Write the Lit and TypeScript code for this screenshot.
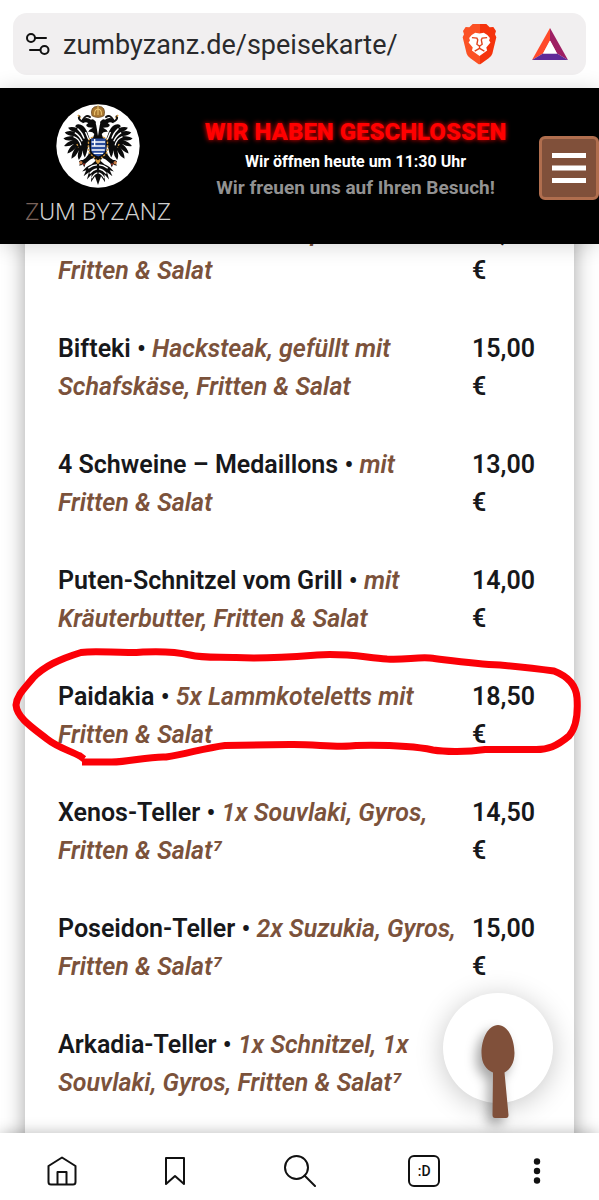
import { LitElement, html, css, svg, nothing } from "lit";
import { customElement, property } from "lit/decorators.js";

interface Dish {
  name: string;
  detail: string;
  price: string;
  marked?: boolean;
}

const DISHES: Dish[] = [
  { name: "Souvlakia", detail: "2x Fleischspieße mit Fritten & Salat", price: "12,50" },
  { name: "Bifteki", detail: "Hacksteak, gefüllt mit Schafskäse, Fritten & Salat", price: "15,00" },
  { name: "4 Schweine – Medaillons", detail: "mit Fritten & Salat", price: "13,00" },
  { name: "Puten-Schnitzel vom Grill", detail: "mit Kräuterbutter, Fritten & Salat", price: "14,00" },
  { name: "Paidakia", detail: "5x Lammkoteletts mit Fritten & Salat", price: "18,50", marked: true },
  { name: "Xenos-Teller", detail: "1x Souvlaki, Gyros, Fritten & Salat⁷", price: "14,50" },
  { name: "Poseidon-Teller", detail: "2x Suzukia, Gyros, Fritten & Salat⁷", price: "15,00" },
  { name: "Arkadia-Teller", detail: "1x Schnitzel, 1x Souvlaki, Gyros, Fritten & Salat⁷", price: "" },
];

// One half of the heraldic eagle; the other half is its mirror image.
const eagleHalf = svg`
  <path fill="#0b0b0b" d="M291 120 L283 112 Q276 104 270 108 Q258 98 246 106 Q238 112 246 118 Q256 112 262 118 Q250 124 262 130
    L276 132 Q264 138 262 144 Q274 142 280 150 L276 162 L266 166 Q262 180 266 200 L262 212
    Q256 222 246 228 Q238 226 234 232 Q242 236 234 244 Q242 244 246 240 L250 250 L254 238 L268 226 L278 222
    L284 230 L272 240 Q256 246 244 262 L256 258 L248 276 L264 264 L258 286 L272 270 L270 294 L282 276 L291 302 Z"/>
  <path fill="#0b0b0b" d="M268 170 L258 142 Q246 118 228 122 Q218 128 230 133 Q212 126 202 132 Q208 142 222 144 Q202 138 192 146 Q200 156 218 156
    Q196 156 188 164 Q196 173 216 168 Q198 174 190 186 Q204 189 220 179 Q202 192 200 208 Q216 204 226 189
    Q212 206 212 224 Q226 218 234 199 Q228 216 234 228 Q244 216 246 199 Q246 214 252 220 Q258 206 260 194 Z"/>
  <path fill="none" stroke="#fff" stroke-width="4" d="M230 134 Q244 146 250 164 M222 146 Q238 156 244 172 M218 158 Q236 164 240 184 M254 144 L264 168
    M262 252 Q276 242 288 242 M266 268 Q276 256 288 254 M272 282 Q280 268 289 266"/>
  <path fill="none" stroke="#111" stroke-width="6" stroke-linecap="round" d="M242 112 Q230 104 236 98 M246 108 Q256 90 267 100"/>
  <path fill="none" stroke="#d79a3c" stroke-width="4" stroke-dasharray="6 4" d="M231 94 L240 103 M276 160 Q260 164 263 180 Q258 206 276 216 Q284 224 291 236 M228 180 L233 190"/>
  <circle cx="240" cy="236" r="5" fill="#c67a45"/>
  <circle cx="249" cy="240" r="3" fill="#a33324"/>
`;

@customElement("restaurant-header")
export class RestaurantHeader extends LitElement {
  static styles = css`
    :host {
      display: flex;
      align-items: center;
      height: 156px;
      padding-left: 26px;
      background: #000;
      color: #fff;
      position: relative;
      z-index: 2;
      box-shadow: 0 2px 20px rgba(0, 0, 0, 0.16);
      box-sizing: border-box;
    }
    .brand {
      display: flex;
      flex-direction: column;
      align-items: center;
      gap: 8px;
      width: 144px;
      color: #cfcfcf;
      text-decoration: none;
      font-size: 24px;
      font-weight: 300;
      line-height: 32px;
      white-space: nowrap;
    }
    .brand svg {
      width: 84px;
      height: 84px;
    }
    .initial {
      color: #7a625a;
    }
    .hours {
      flex: 1;
      text-align: center;
      padding: 0 0 16px 2px;
    }
    .hours p {
      margin: 0;
    }
    .closed {
      font-size: 24px;
      line-height: 32px;
      font-weight: 900;
      color: #f00;
      text-shadow: 0 0 5px #f00;
    }
    .opening {
      font-size: 16px;
      line-height: 28px;
      font-weight: 700;
    }
    .welcome {
      font-size: 19px;
      line-height: 24px;
      font-weight: 700;
      color: #929292;
    }
    .menu {
      width: 60px;
      height: 64px;
      padding: 0;
      border: 3px solid #b06e4e;
      border-radius: 6px;
      background: #80503a;
      display: grid;
      place-items: center;
      margin-top: 4px;
    }
  `;

  render() {
    return html`
      <a class="brand" href="#">
        <svg viewBox="166 61 250 250" aria-hidden="true">
          <circle cx="291" cy="186" r="124" fill="#fff" />
          <g>${eagleHalf}</g>
          <g transform="translate(582 0) scale(-1 1)">${eagleHalf}</g>
          <path d="M273 96 Q266 68 291 68 Q316 68 309 96 Q291 106 273 96Z" fill="#a97832" stroke="#5b3b17" stroke-width="2" />
          <path d="M281 94 Q279 78 291 76 Q303 78 301 94 M291 63 V94" fill="none" stroke="#efc873" stroke-width="3" />
          <path d="M291 106 Q281 112 286 126 L291 156 L296 126 Q301 112 291 106Z" fill="#fff" />
          <path d="M270 164 H314 V194 Q312 212 292 217 Q272 212 270 194Z" fill="#2a4d9d" />
          <path d="M272 174 H312 M272 186 H312 M272 198 H311 M278 208 H306 M281 165 V186" stroke="#fff" stroke-width="4" />
          <path d="M284 232 L291 240 L298 232 L291 226Z" fill="#d79a3c" />
        </svg>
        <span><span class="initial">Z</span>UM BYZANZ</span>
      </a>
      <div class="hours">
        <p class="closed">WIR HABEN GESCHLOSSEN</p>
        <p class="opening">Wir öffnen heute um 11:30 Uhr</p>
        <p class="welcome">Wir freuen uns auf Ihren Besuch!</p>
      </div>
      <button class="menu" aria-label="Menü">
        <svg width="34" height="32" viewBox="0 0 34 32" aria-hidden="true">
          <path d="M0 3.500H34M0 16H34M0 28.500H34" stroke="#fff" stroke-width="5" />
        </svg>
      </button>
    `;
  }
}

@customElement("dish-row")
export class DishRow extends LitElement {
  @property({ attribute: false }) dish!: Dish;

  static styles = css`
    :host {
      display: grid;
      grid-template-columns: 1fr 69px;
      gap: 12px;
      position: relative;
      font-size: 25px;
      line-height: 1.5;
      font-weight: 600;
      color: #17181b;
    }
    .text,
    .price {
      margin: 0;
    }
    .detail {
      color: #7b523b;
      font-style: italic;
    }
    .mark {
      position: absolute;
      top: -29px;
      left: -46px;
      width: calc(100% + 86px);
      height: 116px;
      overflow: visible;
      pointer-events: none;
      z-index: 1;
    }
  `;

  render() {
    const { name, detail, price, marked } = this.dish;
    return html`
      <p class="text">${name} • <span class="detail">${detail}</span></p>
      ${price ? html`<p class="price">${price} €</p>` : nothing}
      ${marked
        ? html`<svg class="mark" viewBox="12 648 569 116" preserveAspectRatio="none" aria-hidden="true">
            <path
              d="M84 758 L80 755 C68 749 57 746 47 738 C33 727 17 717 16 704 C17 694 24 688 33 677 C44 665 60 658 81 651.500 C99 649 120 653 143 651 C164 650 177 651 190 654 C202 657 214 656 236 656.500 C265 658 290 656 317 654 C345 652 362 656 387 658 C405 659 416 656 430 657 C455 660 475 663 500 664 C520 666 538 668 554 670 C567 675 576 683 577 697 C578 712 576 727 569 735 C557 745 548 749 534 748.500 L485 748.500 C467 751 445 751 433 749 C408 744 380 744 356 744.500 C337 747 315 743 290 743.500 L225 744.500 C204 747 187 753 166 756 C148 755 126 762 109 761 L82 761"
              fill="none"
              stroke="#fb0007"
              stroke-width="7"
              stroke-linejoin="round"
            />
          </svg>`
        : nothing}
    `;
  }
}

@customElement("app-root")
export class AppRoot extends LitElement {
  static styles = css`
    :host {
      display: flex;
      flex-direction: column;
      height: 100vh;
      overflow: hidden;
      background: #fff;
      font-family: Roboto, sans-serif;
    }
    .toolbar {
      padding: 13px;
    }
    .address {
      display: flex;
      align-items: center;
      height: 62px;
      padding: 0 18px 0 13px;
      border-radius: 14px;
      background: #f1eff0;
    }
    .url {
      flex: 1;
      min-width: 0;
      margin-left: 12px;
      padding: 2px 0 0;
      border: 0;
      background: none;
      font: 400 27px/36px Roboto, sans-serif;
      color: #2a2a2c;
    }
    .icon {
      display: grid;
      place-items: center;
      padding: 0;
      border: 0;
      background: none;
      color: #111;
    }
    .rewards {
      margin-left: 35px;
    }
    .page {
      flex: 1;
      min-height: 0;
      overflow: hidden;
      position: relative;
      display: flow-root;
    }
    .card {
      margin: -40px 25px 0;
      padding: 10px 33px 60px;
      background: #fff;
      box-shadow: 0 0 20px rgba(0, 0, 0, 0.36);
    }
    .dishes {
      list-style: none;
      margin: 0;
      padding: 0;
      display: grid;
      gap: 41px;
    }
    .spoon {
      position: absolute;
      right: 46px;
      bottom: 30px;
      width: 110px;
      height: 110px;
      padding: 0;
      border: 0;
      border-radius: 50%;
      background: #fff;
      box-shadow: 0 4px 28px rgba(0, 0, 0, 0.22);
      z-index: 2;
    }
    .spoon svg {
      position: absolute;
      left: 38px;
      top: 32px;
      filter: drop-shadow(-5px 6px 6px rgba(0, 0, 0, 0.35));
    }
    .tabs {
      display: grid;
      grid-template-columns: 5fr 4fr 6fr 4fr 5fr;
      place-items: center;
      height: 67px;
      padding-top: 8px;
      box-sizing: border-box;
      background: #fff;
      position: relative;
      z-index: 3;
      box-shadow: 0 0 14px rgba(0, 0, 0, 0.28);
    }
    .count {
      width: 32px;
      height: 32px;
      box-sizing: border-box;
      border: 2px solid #111;
      border-radius: 6px;
      font: 500 14px/26px Roboto, sans-serif;
    }
  `;

  render() {
    return html`
      <div class="toolbar">
        <div class="address">
          <button class="icon" aria-label="Website-Einstellungen">
            <svg width="25" height="24" viewBox="0 0 25 24" fill="none" stroke="#111" stroke-width="2" stroke-linecap="round">
              <circle cx="5" cy="6" r="4" />
              <path d="M9.500 6H20M4 18H14" />
              <circle cx="18.500" cy="18" r="4" />
            </svg>
          </button>
          <input class="url" type="text" aria-label="Adresse" value="zumbyzanz.de/speisekarte/" />
          <button class="icon" aria-label="Schutz">
            <svg width="35" height="42" viewBox="0 0 105 126">
              <defs>
                <linearGradient id="lion"><stop offset="0.500" stop-color="#fb5124" /><stop offset="0.500" stop-color="#f5330c" /></linearGradient>
              </defs>
              <path d="M32 3 H73 L83 13 L94 12 L102 24 L99 34 L103 43 L91 92 Q88 100 80 106 L57 122 Q52 125 48 122 L25 106 Q17 100 14 92 L2 43 L6 34 L3 24 L11 12 L22 13Z" fill="url(#lion)" />
              <g transform="translate(9 9) scale(0.830)">
                <path d="M52.500 27 L37 24 Q22 31 15 43 L18 52 L13 60 L28 78 L25 89 L52.500 108 L80 89 L77 78 L92 60 L87 52 L90 43 Q83 31 68 24Z" fill="#fff" />
                <path d="M25 42 L43 44 L46 50 L43 66 L52.500 73 L62 66 L59 50 L62 44 L80 42 M52.500 73 V82 M35 91 L52.500 81 L70 91" fill="none" stroke="#e0431c" stroke-width="5" />
              </g>
            </svg>
          </button>
          <button class="icon rewards" aria-label="Prämien">
            <svg width="36" height="32" viewBox="0 0 36 32">
              <path d="M18 0 L0 32 L11 25.500 L18 12.500Z" fill="#ff4a2b" />
              <path d="M18 0 L36 32 L25 25.500 L18 12.500Z" fill="#9e1f63" />
              <path d="M0 32 H36 L25 25.500 H11Z" fill="#5f2a98" />
              <path d="M18 12.500 L25 25.500 H11Z" fill="#fff" />
            </svg>
          </button>
        </div>
      </div>
      <restaurant-header></restaurant-header>
      <main class="page">
        <section class="card">
          <ul class="dishes">
            ${DISHES.map((dish) => html`<li><dish-row .dish=${dish}></dish-row></li>`)}
          </ul>
        </section>
        <button class="spoon" aria-label="Reservieren">
          <svg width="34" height="94" viewBox="0 0 34 94" aria-hidden="true">
            <path d="M17 0 C27 0 33.500 14 33.500 28 C33.500 38 29 45 23.500 47.500 L27.500 90 Q27.500 93 25 93 H14 Q11.500 93 11.500 90 L12 47.500 C5 45 0.500 38 0.500 28 C0.500 14 7 0 17 0Z" fill="#80503a" />
          </svg>
        </button>
      </main>
      <nav class="tabs">
        <button class="icon" aria-label="Startseite">
          <svg width="30" height="30" viewBox="0 0 30 30" fill="none" stroke="#111" stroke-width="2" stroke-linejoin="round">
            <path d="M15 1.500 L28.500 10 V26 Q28.500 28.500 26 28.500 H4 Q1.500 28.500 1.500 26 V10Z M10.500 28 V16 H19.500 V28" />
          </svg>
        </button>
        <button class="icon" aria-label="Lesezeichen">
          <svg width="22" height="30" viewBox="0 0 22 30" fill="none" stroke="#111" stroke-width="2" stroke-linejoin="round">
            <path d="M2 2 H20 V28 L11 20 L2 28Z" />
          </svg>
        </button>
        <button class="icon" aria-label="Suche">
          <svg width="32" height="32" viewBox="0 0 32 32" fill="none" stroke="#111" stroke-width="2" stroke-linecap="round">
            <circle cx="12.500" cy="12.500" r="11.500" />
            <path d="M20.500 20.500 L31 31" />
          </svg>
        </button>
        <button class="icon count" aria-label="Tabs">:D</button>
        <button class="icon" aria-label="Mehr">
          <svg width="8" height="26" viewBox="0 0 8 26" fill="#111">
            <circle cx="4" cy="3.500" r="3.200" /><circle cx="4" cy="13" r="3.200" /><circle cx="4" cy="22.500" r="3.200" />
          </svg>
        </button>
      </nav>
    `;
  }
}
